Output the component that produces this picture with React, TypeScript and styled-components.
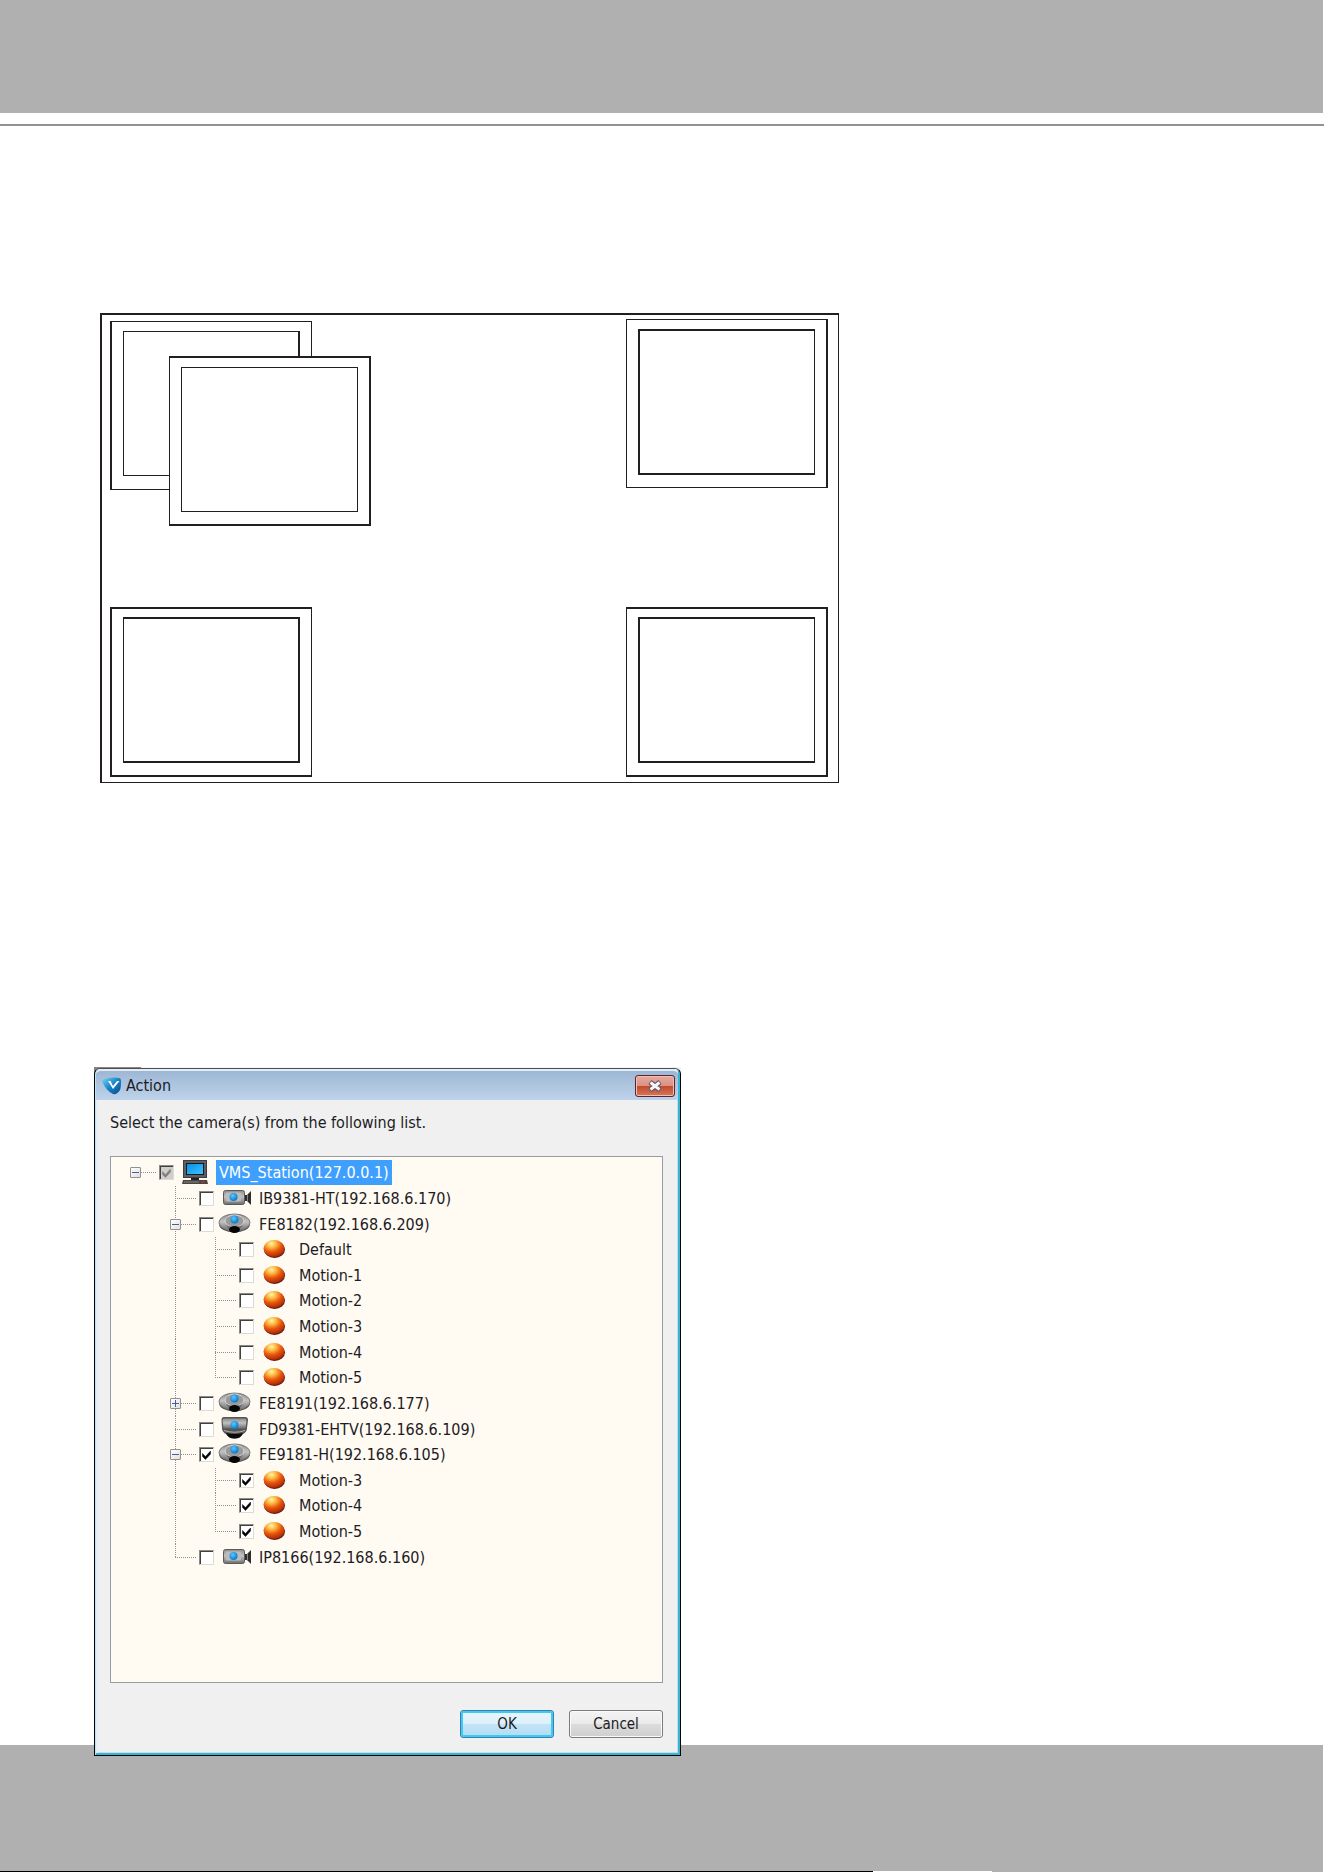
import React, { useState } from "react";
import styled, { createGlobalStyle, css } from "styled-components";

const Global = createGlobalStyle`
  *, *::before, *::after { box-sizing: border-box; }
  body {
    margin: 0;
    background: #fff;
    color: #1c1c24;
    font-family: "DejaVu Sans Condensed", "DejaVu Sans", sans-serif;
    font-size: 16px;
    line-height: 20px;
  }
`;

const Page = styled.div`
  display: flex;
  flex-direction: column;
  min-height: 100vh;
`;

const HeaderBand = styled.header`
  height: 113px;
  margin-right: 1px;
  background: #b0b0b0;
`;

const Rule = styled.hr`
  width: 100%;
  height: 2px;
  margin: 11px 0 0;
  border: 0;
  background: #929292;
`;

const Main = styled.main`
  display: flex;
  flex-direction: column;
  align-items: flex-start;
  gap: 284px;
  padding: 187px 94px 0;
`;

const FooterBand = styled.footer`
  flex: 1 0 127px;
  display: flex;
  align-items: flex-end;
  margin: -11px 1px 0 0;
  background: #b0b0b0;
`;

const FooterEdge = styled.div`
  width: 75%;
  height: 1px;
  background: linear-gradient(to right, #000 88%, #fff 88%);
`;

/* Monitor layout diagram */

const ink = "#231f20";

const Desktop = styled.section`
  position: relative;
  width: 739px;
  height: 470px;
  margin-left: 6px;
  border: solid ${ink};
  border-width: 2px 1px 1px 2px;
`;

const Frame = styled.div<{ $x: number; $y: number; $h: number; $pad: number; $edges: string }>`
  position: absolute;
  left: ${(p) => p.$x}px;
  top: ${(p) => p.$y}px;
  width: 202px;
  height: ${(p) => p.$h}px;
  padding: ${(p) => p.$pad}px 0 0 11px;
  border: solid ${ink};
  border-width: ${(p) => p.$edges};
  background: #fff;
`;

const Screen = styled.div<{ $h: number; $edges: string }>`
  width: 177px;
  height: ${(p) => p.$h}px;
  border: solid ${ink};
  border-width: ${(p) => p.$edges};
`;

const frames = [
  { x: 8, y: 6, h: 169, pad: 9, screen: 145, outer: "1px 1px 1px 2px", inner: "1px 2px 1px 1px" },
  { x: 67, y: 41, h: 170, pad: 9, screen: 145, outer: "2px 2px 2px 1px", inner: "1px" },
  { x: 524, y: 4, h: 169, pad: 9, screen: 146, outer: "1px 2px 1px 1px", inner: "2px 1px 2px 2px" },
  { x: 8, y: 292, h: 170, pad: 8, screen: 146, outer: "2px 1px 2px 2px", inner: "2px 2px 2px 1px" },
  { x: 524, y: 292, h: 170, pad: 8, screen: 146, outer: "2px 2px 2px 1px", inner: "2px 1px 2px 2px" },
];

/* Action dialog */

const Backdrop = styled.div`
  position: relative;
  z-index: 1;
  width: 587px;
  max-width: 100%;
  padding-top: 1px;
  background: linear-gradient(#927f7e, #927f7e) 0 0 / 47px 33px no-repeat #f2f2f2;
`;

const Window = styled.section`
  border: 1px solid #000;
  border-top-color: #4c5058;
  border-radius: 6px 6px 0 0;
  background: #f0f0f0;
  box-shadow: inset 1px 0 #b9e6f5, inset -2px -2px #35b6d2, inset 3px 0 #e3eef8, inset -3px -3px #c4dcf0;
`;

const TitleBar = styled.div`
  display: flex;
  align-items: center;
  gap: 4px;
  height: 31px;
  margin: 0 2px 0 1px;
  padding: 0 3px 0 6px;
  border-top: 2px solid #e4edf6;
  border-radius: 5px 5px 0 0;
  background: linear-gradient(#9db7d4, #bed3eb);
`;

const Title = styled.h1`
  flex: 1;
  margin: 0;
  font-size: 16px;
  font-weight: 400;
`;

const CloseButton = styled.button`
  display: grid;
  place-items: center;
  width: 40px;
  height: 22px;
  padding: 0;
  border: 1px solid #5a2630;
  border-radius: 3px;
  background: linear-gradient(#e8a99c, #dc9185 48%, #c04a2c 50%, #d4765c);
  box-shadow: inset 0 0 0 1px #efbfb2;
`;

const Body = styled.div`
  display: flex;
  flex-direction: column;
  padding: 13px 17px 17px 15px;
`;

const Prompt = styled.p`
  margin: 0 0 23px;
`;

const TreeBox = styled.div`
  height: 527px;
  padding: 3px 4px;
  border: 1px solid #9a9ca4;
  background: #fffaf2;
  overflow: auto;
`;

const Tree = styled.ul`
  display: grid;
  grid-template-rows: repeat(16, 1fr);
  height: 410px;
  margin: 0;
  padding: 0;
  list-style: none;
`;

const Row = styled.li`
  display: flex;
  align-items: stretch;
`;

const vDots = "repeating-linear-gradient(to bottom, #94908c 0 1px, transparent 1px 2px)";
const hDots = "repeating-linear-gradient(to right, #94908c 0 1px, transparent 1px 2px)";

const Guide = styled.span<{ $line: boolean }>`
  flex: none;
  width: 40px;
  ${(p) =>
    p.$line &&
    css`
      background: ${vDots} 20px 0 / 1px 100% no-repeat;
    `}
`;

const Branch = styled.span<{ $stem: "none" | "full" | "half" }>`
  flex: none;
  display: flex;
  align-items: center;
  width: 44px;
  padding-left: 15px;
  background:
    ${hDots} 20px 50% / 22px 1px no-repeat,
    ${vDots} 20px 0 / ${(p) => ({ none: "0 0", full: "1px 100%", half: "1px 50%" })[p.$stem]} no-repeat;
`;

const Toggle = styled.button`
  display: grid;
  place-items: center;
  width: 11px;
  height: 11px;
  padding: 0;
  border: 1px solid #92918f;
  border-radius: 1px;
  background: linear-gradient(135deg, #fff, #e2e0dc);
`;

const CheckLabel = styled.label`
  display: flex;
  align-items: center;
`;

const Check = styled.span`
  display: grid;
  width: 15px;
  height: 15px;
  & > * { grid-area: 1 / 1; margin: 0; }
  & > svg { pointer-events: none; }
`;

const Box = styled.input<{ $partial: boolean }>`
  appearance: none;
  width: 15px;
  height: 15px;
  border: 1px solid;
  border-color: #8a8a86 #dedbd5 #dedbd5 #8a8a86;
  background: ${(p) => (p.$partial ? "#cfcecb" : "#fff")};
  box-shadow: inset 1px 1px #404040;
`;

const Name = styled.span<{ $selected: boolean }>`
  padding: 3px 3px 2px;
  white-space: nowrap;
  ${(p) =>
    p.$selected &&
    css`
      background: #3f9fff;
      color: #fff;
    `}
`;

const Actions = styled.div`
  display: flex;
  justify-content: flex-end;
  gap: 15px;
  margin-top: 27px;
`;

const PushButton = styled.button<{ $primary?: boolean }>`
  width: 94px;
  height: 28px;
  padding: 0;
  border: 1px solid ${(p) => (p.$primary ? "#3b7fa8" : "#7c7c7c")};
  border-radius: 3px;
  background: ${(p) =>
    p.$primary
      ? "linear-gradient(#e8f5fd, #ddf0fb 48%, #c4e4f7 50%, #b2dbf3)"
      : "linear-gradient(#f3f3f3, #ebebeb 48%, #dcdcdc 50%, #cfcfcf)"};
  box-shadow: ${(p) => (p.$primary ? "inset 0 0 0 2px #3ccbf6" : "inset 0 0 0 1px #fafafa")};
  color: inherit;
  font-family: inherit;
  font-size: 15px;
  line-height: 20px;
`;

type Kind = "station" | "box" | "fisheye" | "dome" | "motion";

const HiddenSvg = styled.svg`
  position: absolute;
`;

function Defs() {
  return (
    <HiddenSvg width="0" height="0" aria-hidden="true">
      <defs>
        <radialGradient id="orange" cx="0.38" cy="0.22" r="0.8">
          <stop offset="0" stopColor="#fff6b0" />
          <stop offset="0.28" stopColor="#fdb840" />
          <stop offset="0.6" stopColor="#e8560c" />
          <stop offset="1" stopColor="#a82406" />
        </radialGradient>
        <linearGradient id="steel" x1="0" y1="0" x2="0" y2="1">
          <stop offset="0" stopColor="#8c8c8c" />
          <stop offset="0.45" stopColor="#c2c2c2" />
          <stop offset="1" stopColor="#6c6c6c" />
        </linearGradient>
        <radialGradient id="lens" cx="0.4" cy="0.35" r="0.65">
          <stop offset="0" stopColor="#5cc8ff" />
          <stop offset="1" stopColor="#0779c8" />
        </radialGradient>
        <linearGradient id="glass" x1="0" y1="0" x2="1" y2="1">
          <stop offset="0" stopColor="#0a8fe0" />
          <stop offset="1" stopColor="#3cc4ff" />
        </linearGradient>
        <linearGradient id="logo" x1="0" y1="0" x2="1" y2="1">
          <stop offset="0" stopColor="#7ad4f6" />
          <stop offset="0.5" stopColor="#1684c8" />
          <stop offset="1" stopColor="#0a4b8c" />
        </linearGradient>
      </defs>
    </HiddenSvg>
  );
}

const art: Record<Kind, React.ReactNode> = {
  station: (
    <>
      <rect x="9" y="0" width="24" height="18" fill="#3b3d3f" />
      <rect x="10" y="1" width="22" height="16" fill="#5b5f62" />
      <rect x="12" y="3" width="18" height="12" fill="#0c1a24" />
      <rect x="13" y="4" width="16" height="10" fill="url(#glass)" />
      <path d="M17 18h8v2h-8z" fill="#222" />
      <path d="M9 20h24l1 4H8z" fill="#4a4443" />
      <path d="M10 22h15" stroke="#8c8582" />
      <path d="M27 22h4" stroke="#d23a2c" />
    </>
  ),
  box: (
    <>
      <rect x="9.500" y="4.500" width="21" height="14" rx="2" fill="url(#steel)" stroke="#5a5a5a" />
      <rect x="12" y="6.500" width="15" height="9" rx="1" fill="#bcbcbc" />
      <path d="M31 9h2l4-4v14l-4-4h-2z" fill="#2e2e2e" />
      <path d="M33.500 9v6" stroke="#8a8a8a" />
      <circle cx="19.500" cy="11" r="4" fill="url(#lens)" />
    </>
  ),
  fisheye: (
    <>
      <ellipse cx="20.500" cy="12" rx="15.500" ry="8.500" fill="#4c4c4c" />
      <ellipse cx="20.500" cy="10.500" rx="15.500" ry="8.500" fill="url(#steel)" stroke="#7a7a7a" />
      <ellipse cx="20.500" cy="9" rx="9.500" ry="6" fill="#9a9a9a" stroke="#d4d4d4" />
      <path d="M12 13q8 4 17 0l-3 4q-5 2-11 0z" fill="#6e6e6e" />
      <ellipse cx="20.500" cy="17.500" rx="5.500" ry="3.500" fill="#050505" />
      <circle cx="20.500" cy="7.500" r="4" fill="url(#lens)" />
    </>
  ),
  dome: (
    <>
      <path d="M10 0h21q3 0 3 3l-1 8q0 4-4 6-3 4.500-8.500 4.500T12 17q-4-2-4-6L7.500 3q0-3 2.500-3z" fill="#555" />
      <path d="M10.500 1.500h20q2 0 2 2l-1 8h-22l-1-8q0-2 2-2z" fill="url(#steel)" />
      <path d="M12 16q8.500 2 17 0-2 5.500-8.500 5.500T12 16z" fill="#0c0c0c" />
      <path d="M10 13.500q10.500 3.500 21 0" fill="none" stroke="#b4b4b4" />
      <circle cx="20.500" cy="8" r="4" fill="url(#lens)" />
    </>
  ),
  motion: (
    <>
      <ellipse cx="20.500" cy="12.500" rx="10.500" ry="8.500" fill="#5c1c14" />
      <ellipse cx="20" cy="11.500" rx="10.500" ry="8.500" fill="url(#orange)" />
    </>
  ),
};

function DeviceIcon({ kind }: { kind: Kind }) {
  return (
    <svg width="42" height="25" viewBox="0 0 42 25" aria-hidden="true">
      {art[kind]}
    </svg>
  );
}

type Node = {
  name: string;
  level: 0 | 1 | 2;
  kind: Kind;
  toggle?: "open" | "closed";
  checked?: boolean;
  partial?: boolean;
  last?: boolean;
};

const motion = (name: string, checked = false, last = false): Node => ({
  name,
  level: 2,
  kind: "motion",
  checked,
  last,
});

const nodes: Node[] = [
  { name: "VMS_Station(127.0.0.1)", level: 0, kind: "station", toggle: "open", checked: true, partial: true },
  { name: "IB9381-HT(192.168.6.170)", level: 1, kind: "box" },
  { name: "FE8182(192.168.6.209)", level: 1, kind: "fisheye", toggle: "open" },
  motion("Default"),
  motion("Motion-1"),
  motion("Motion-2"),
  motion("Motion-3"),
  motion("Motion-4"),
  motion("Motion-5", false, true),
  { name: "FE8191(192.168.6.177)", level: 1, kind: "fisheye", toggle: "closed" },
  { name: "FD9381-EHTV(192.168.6.109)", level: 1, kind: "dome" },
  { name: "FE9181-H(192.168.6.105)", level: 1, kind: "fisheye", toggle: "open", checked: true },
  motion("Motion-3", true),
  motion("Motion-4", true),
  motion("Motion-5", true, true),
  { name: "IP8166(192.168.6.160)", level: 1, kind: "box", last: true },
];

function TreeRow({ node }: { node: Node }) {
  const [checked, setChecked] = useState(Boolean(node.checked));
  const stem = node.level === 0 ? "none" : node.last ? "half" : "full";
  return (
    <Row>
      {Array.from({ length: node.level }, (_, i) => (
        <Guide key={i} $line={i > 0} />
      ))}
      <Branch $stem={stem}>
        {node.toggle && (
          <Toggle type="button" aria-label={`Toggle ${node.name}`}>
            <svg width="9" height="9" viewBox="0 0 9 9" aria-hidden="true">
              <path d={node.toggle === "open" ? "M1 4.500h7" : "M1 4.500h7M4.500 1v7"} stroke="#3f5fa8" />
            </svg>
          </Toggle>
        )}
      </Branch>
      <CheckLabel>
        <Check>
          <Box
            type="checkbox"
            checked={checked}
            $partial={Boolean(node.partial)}
            onChange={(e) => setChecked(e.target.checked)}
          />
          {checked && (
            <svg width="15" height="15" viewBox="0 0 15 15" aria-hidden="true">
              <path
                d="M3.500 6.500l3 3 5-5.500v3l-5 5.500-3-3z"
                fill={node.partial ? "#808080" : "#000"}
                stroke={node.partial ? "#808080" : "#000"}
                strokeWidth="0.500"
              />
            </svg>
          )}
        </Check>
        <DeviceIcon kind={node.kind} />
        <Name $selected={node.level === 0}>{node.name}</Name>
      </CheckLabel>
    </Row>
  );
}

export default function App() {
  return (
    <>
      <Global />
      <Defs />
      <Page>
        <HeaderBand />
        <Rule />
        <Main>
          <Desktop aria-label="Monitor layout">
            {frames.map((f) => (
              <Frame key={`${f.x}-${f.y}`} $x={f.x} $y={f.y} $h={f.h} $pad={f.pad} $edges={f.outer}>
                <Screen $h={f.screen} $edges={f.inner} />
              </Frame>
            ))}
          </Desktop>
          <Backdrop>
            <Window role="dialog" aria-labelledby="dialog-title">
              <TitleBar>
                <svg width="20" height="20" viewBox="0 0 20 20" aria-hidden="true">
                  <path d="M0 5Q1 3 5 2.500 12 1 17 2q2 0 2 3 0 7-1 9-3 5-7 4Q4 15 0 5z" fill="url(#logo)" />
                  <path d="M6 5h2.500l2.500 5 4-5h2.500l-6.500 8z" fill="#fff" />
                </svg>
                <Title id="dialog-title">Action</Title>
                <CloseButton type="button" aria-label="Close">
                  <svg width="16" height="12" viewBox="0 0 16 12" aria-hidden="true">
                    <path d="M3 2l10 8M13 2l-10 8" stroke="#5b4f5c" strokeWidth="5" />
                    <path d="M3.500 2.500l9 7M12.500 2.500l-9 7" stroke="#f5f5f5" strokeWidth="3" />
                  </svg>
                </CloseButton>
              </TitleBar>
              <Body>
                <Prompt>Select the camera(s) from the following list.</Prompt>
                <TreeBox>
                  <Tree>
                    {nodes.map((node, i) => (
                      <TreeRow key={i} node={node} />
                    ))}
                  </Tree>
                </TreeBox>
                <Actions>
                  <PushButton type="button" $primary>
                    OK
                  </PushButton>
                  <PushButton type="button">Cancel</PushButton>
                </Actions>
              </Body>
            </Window>
          </Backdrop>
        </Main>
        <FooterBand>
          <FooterEdge />
        </FooterBand>
      </Page>
    </>
  );
}
